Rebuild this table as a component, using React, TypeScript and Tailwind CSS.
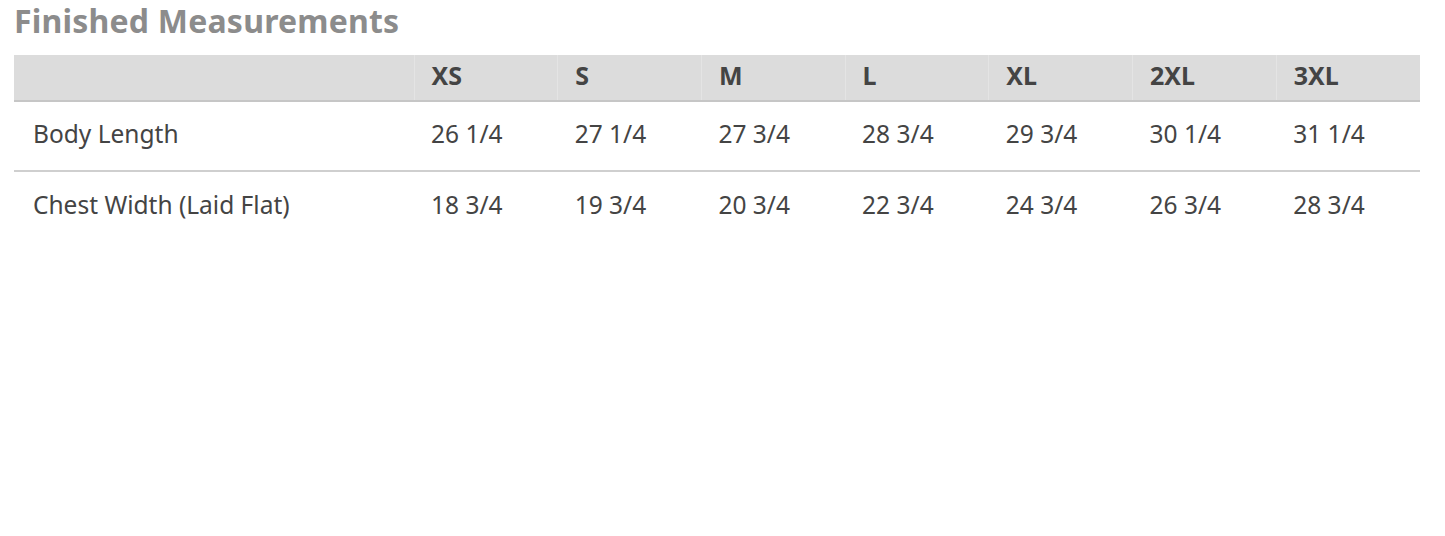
import React from "react";

const sizes = ["XS", "S", "M", "L", "XL", "2XL", "3XL"];
const rows = [
  { label: "Body Length", values: ["26 1/4", "27 1/4", "27 3/4", "28 3/4", "29 3/4", "30 1/4", "31 1/4"] },
  { label: "Chest Width (Laid Flat)", values: ["18 3/4", "19 3/4", "20 3/4", "22 3/4", "24 3/4", "26 3/4", "28 3/4"] },
];

export default function App() {
  return (
    <div className="w-[1445px] h-[536px] bg-white px-[14px] pt-[2px]" style={{ fontFamily: '"Noto Sans", "Open Sans", sans-serif' }}>
      <h2 className="text-[32px] leading-[38px] font-bold text-[#8c8c8c] tracking-[0.2px]">Finished Measurements</h2>
      <table className="mt-[15px] w-[1406px] border-collapse table-fixed text-[#444] text-[24.5px]">
        <colgroup>
          <col className="w-[400px]" />
          {sizes.map((s) => (
            <col key={s} />
          ))}
        </colgroup>
        <thead>
          <tr className="bg-[#dcdcdc] border-b-2 border-[#c6c6c6] h-[46px]">
            <th className="border-r border-[#e4e4e4]"></th>
            {sizes.map((s, i) => (
              <th key={s} className={`text-left font-bold pl-[17px] pb-[5px] text-[25px] leading-[30px] ${i < sizes.length - 1 ? "border-r border-[#e4e4e4]" : ""}`}>
                {s}
              </th>
            ))}
          </tr>
        </thead>
        <tbody>
          {rows.map((r, ri) => (
            <tr key={r.label} className={`h-[70px] ${ri === 0 ? "border-b-2 border-[#cfcfcf]" : ""}`}>
              <td className="pl-[19px] pb-[4px] leading-[30px]">{r.label}</td>
              {r.values.map((v, i) => (
                <td key={i} className="pl-[17px] pb-[4px] leading-[30px]">{v}</td>
              ))}
            </tr>
          ))}
        </tbody>
      </table>
    </div>
  );
}
